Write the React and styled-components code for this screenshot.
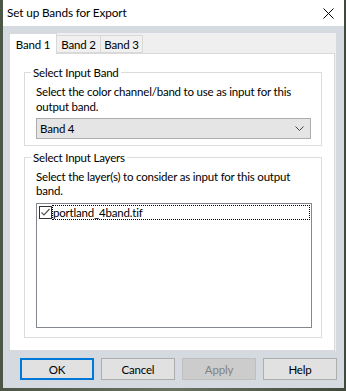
import React from "react";
import styled, { createGlobalStyle } from "styled-components";

const Global = createGlobalStyle`
  html, body { margin: 0; padding: 0; }
  body {
    background: #56604f;
    font-family: Lato, "Noto Sans", "DejaVu Sans", sans-serif;
    font-size: 11.5px;
    letter-spacing: -0.2px;
    color: #000;
  }
`;

const Screen = styled.div`
  width: 346px;
  height: 391px;
  padding: 0 2px 3px 3px;
  box-sizing: border-box;
  background: linear-gradient(90deg, #4c5646 0%, #6a7262 50%, #3f4a3c 100%);
`;

const Window = styled.div`
  width: 341px;
  height: 388px;
  background: #d5dae1;
  display: flex;
  flex-direction: column;
  box-sizing: border-box;
`;

const TitleBar = styled.div`
  height: 26px;
  background: #ffffff;
  display: flex;
  align-items: center;
  justify-content: space-between;
  padding: 0 10px 0 4px;
  flex-shrink: 0;
`;

const Title = styled.span`
  font-size: 11.8px;
  letter-spacing: -0.15px;
  line-height: 16px;
  white-space: nowrap;
`;

const Close = styled.svg`
  width: 11px;
  height: 11px;
  display: block;
`;

const Body = styled.div`
  flex: 1;
  display: flex;
  flex-direction: column;
  padding: 7px 7px 0 6px;
`;

const TabControl = styled.div`
  background: #efefef;
  display: flex;
  flex-direction: column;
  width: 327px;
  height: 318px;
  flex-shrink: 0;
`;

const TabStrip = styled.div`
  display: flex;
  align-items: flex-end;
  height: 20px;
  position: relative;
  z-index: 1;
  flex-shrink: 0;
`;

const Tab = styled.div`
  box-sizing: border-box;
  border: 1px solid #d9d9d9;
  border-bottom: ${(p) => (p.$active ? "none" : "1px solid #d9d9d9")};
  background: ${(p) => (p.$active ? "#ffffff" : "#f0f0f0")};
  height: ${(p) => (p.$active ? "21px" : "18px")};
  width: ${(p) => p.$w}px;
  margin-bottom: ${(p) => (p.$active ? "-1px" : "0")};
  margin-left: ${(p) => (p.$first ? "0" : "-1px")};
  padding-top: ${(p) => (p.$active ? "2px" : "0")};
  text-align: center;
  line-height: 17px;
  white-space: nowrap;
`;

const Page = styled.div`
  background: #ffffff;
  border: 1px solid #d9d9d9;
  width: 326px;
  height: 299px;
  box-sizing: border-box;
  padding: 11px 12px 0 14px;
  display: flex;
  flex-direction: column;
  gap: 4px;
  overflow: hidden;
`;

const Group = styled.fieldset`
  margin: 0;
  padding: 0;
  border: 1px solid #dcdcdc;
  min-width: 0;
`;

const Legend = styled.legend`
  margin-left: 6px;
  padding: 0 2px;
  line-height: 15px;
  white-space: nowrap;
`;

const GroupInner = styled.div`
  padding: ${(p) => p.$pad};
  display: flex;
  flex-direction: column;
`;

const Desc = styled.div`
  line-height: ${(p) => p.$lh || "14px"};
  white-space: nowrap;
`;

const Combo = styled.div`
  margin-top: ${(p) => p.$mt};
  height: 21px;
  box-sizing: border-box;
  border: 1px solid #adadad;
  background: #e5e5e5;
  display: flex;
  align-items: center;
  justify-content: space-between;
  padding: 0 6px 0 3px;
`;

const ComboText = styled.span`
  line-height: 16px;
`;

const Chevron = styled.svg`
  width: 9px;
  height: 5px;
  display: block;
`;

const ListBox = styled.div`
  margin-top: ${(p) => p.$mt};
  height: 125px;
  box-sizing: border-box;
  border: 1px solid #828790;
  background: #ffffff;
  padding: 1px 1px 0 2px;
`;

const ListItem = styled.div`
  display: flex;
  align-items: center;
  height: 15px;
`;

const Check = styled.svg`
  width: 13px;
  height: 13px;
  display: block;
  flex-shrink: 0;
`;

const ItemLabel = styled.span`
  flex: 1;
  height: 15px;
  box-sizing: border-box;
  border: 1px dotted #000;
  line-height: 13px;
  white-space: nowrap;
`;

const ButtonRow = styled.div`
  display: flex;
  justify-content: flex-end;
  gap: 7px;
  padding-top: 7px;
  width: 328px;
`;

const Button = styled.div`
  width: 74px;
  height: 22px;
  box-sizing: border-box;
  display: flex;
  align-items: center;
  justify-content: center;
  background: ${(p) => (p.$disabled ? "#cccccc" : "#e1e1e1")};
  color: ${(p) => (p.$disabled ? "#838383" : "#000")};
  border: ${(p) =>
    p.$default ? "2px solid #0078d7" : p.$disabled ? "1px solid #bfbfbf" : "1px solid #adadad"};
`;

export default function App() {
  return (
    <>
      <Global />
      <Screen>
        <Window>
          <TitleBar>
            <Title>Set up Bands for Export</Title>
            <Close viewBox="0 0 11 11">
              <path d="M0.5 0.5 L10.5 10.5 M10.5 0.5 L0.5 10.5" stroke="#000" strokeWidth="1" fill="none" />
            </Close>
          </TitleBar>
          <Body>
            <TabControl>
              <TabStrip>
                <Tab $active $first $w={48}>Band 1</Tab>
                <Tab $w={45}>Band 2</Tab>
                <Tab $w={43}>Band 3</Tab>
              </TabStrip>
              <Page>
                <Group>
                  <Legend>Select Input Band</Legend>
                  <GroupInner $pad="4px 10px 6px 11px">
                    <Desc $lh="15px">
                      Select the color channel/band to use as input for this
                      <br />
                      output band.
                    </Desc>
                    <Combo $mt="4px">
                      <ComboText>Band 4</ComboText>
                      <Chevron viewBox="0 0 9 5">
                        <path d="M0.5 0.5 L4.5 4.5 L8.5 0.5" stroke="#444" strokeWidth="1" fill="none" />
                      </Chevron>
                    </Combo>
                  </GroupInner>
                </Group>
                <Group>
                  <Legend>Select Input Layers</Legend>
                  <GroupInner $pad="5px 9px 9px 11px">
                    <Desc $lh="14px">
                      Select the layer(s) to consider as input for this output
                      <br />
                      band.
                    </Desc>
                    <ListBox $mt="5px">
                      <ListItem>
                        <Check viewBox="0 0 13 13">
                          <rect x="0.5" y="0.5" width="12" height="12" fill="#fff" stroke="#333" />
                          <path d="M2.5 6.5 L5 9 L10.5 3" stroke="#555" strokeWidth="1.2" fill="none" />
                        </Check>
                        <ItemLabel>portland_4band.tif</ItemLabel>
                      </ListItem>
                    </ListBox>
                  </GroupInner>
                </Group>
              </Page>
            </TabControl>
            <ButtonRow>
              <Button $default>OK</Button>
              <Button>Cancel</Button>
              <Button $disabled>Apply</Button>
              <Button>Help</Button>
            </ButtonRow>
          </Body>
        </Window>
      </Screen>
    </>
  );
}
